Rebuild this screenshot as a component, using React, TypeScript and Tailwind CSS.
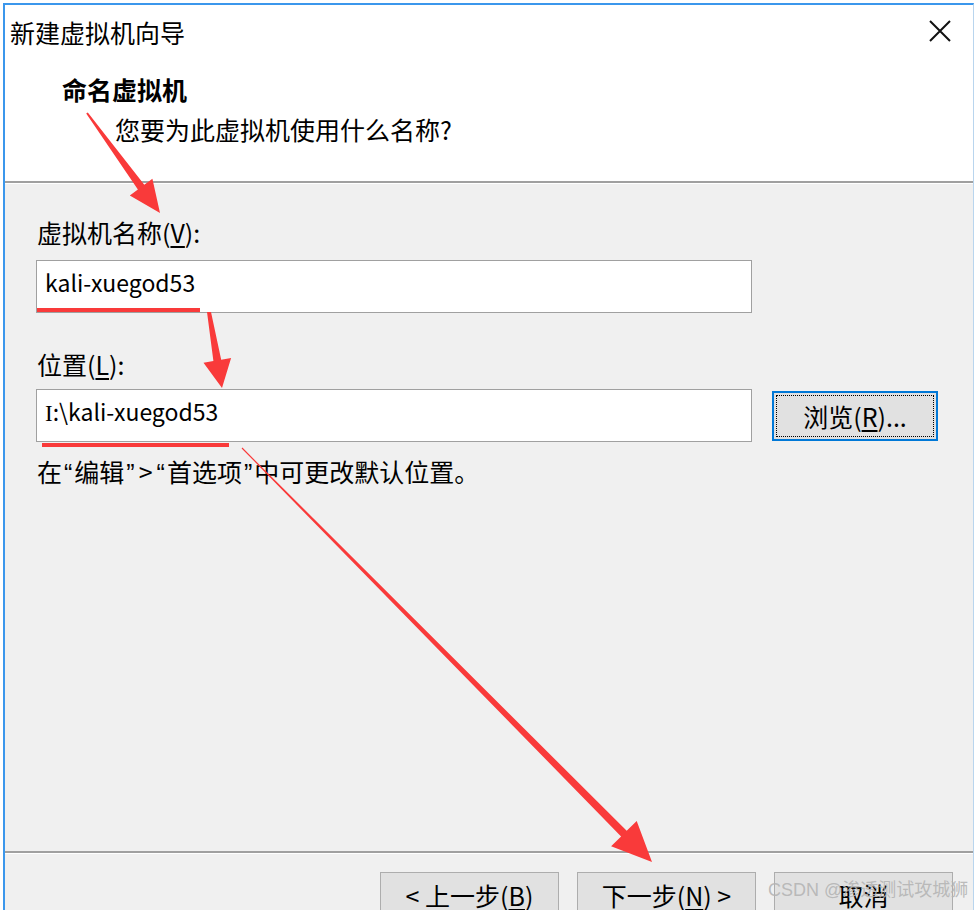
import React from "react";

function Arrows() {
  return (
    <svg
      className="absolute inset-0 pointer-events-none"
      width={975}
      height={910}
      viewBox="0 0 975 910"
    >
      {/* underlines */}
      <rect x={37} y={308} width={163} height={4} fill="#f93a3a" />
      <rect x={42} y={443} width={187} height={4} fill="#f93a3a" />
      {/* arrow 1 */}
      <polygon
        points="86.2,113.6 87.8,112.4 144.3,184.7 152.4,178.8 160,213 129.8,195.4 137.9,189.5"
        fill="#f93a3a"
      />
      {/* arrow 2 */}
      <polygon
        points="207,312 211,312 221.2,359.8 231.1,358 222,388 203.5,362.8 213.4,361"
        fill="#f93a3a"
      />
      {/* arrow 3 */}
      <polygon
        points="241.6,448.4 242.4,447.6 626.7,830.8 636.7,820.9 652,862 611.1,846.3 621.1,836.4"
        fill="#f93a3a"
      />
    </svg>
  );
}

function Btn({ children }: { children: React.ReactNode }) {
  return (
    <div className="w-[179px] h-[46px] shrink-0 border border-[#adadad] bg-[#e1e1e1] flex items-center justify-center text-[25px] leading-[30px]">
      {children}
    </div>
  );
}

function Key({ k }: { k: string }) {
  return <span className="underline underline-offset-[3px]">{k}</span>;
}

function Q({ c }: { c: string }) {
  return <span className="mx-[2px] font-['Liberation_Sans',sans-serif]">{c}</span>;
}

export default function App() {
  return (
    <div className="w-[975px] h-[910px] bg-white relative overflow-hidden text-black font-['Noto_Sans_CJK_SC','Noto_Sans',sans-serif]">
      <div className="ml-[3px] mt-[3px] w-[971px] h-[907px] border-l-2 border-t-2 border-r border-[#3b97ec] border-r-[#b9d5ee] flex flex-col overflow-hidden">
        {/* header */}
        <div className="h-[176px] shrink-0 bg-white flex flex-col">
          <div className="flex justify-between items-start">
            <div className="mt-[12px] ml-[5px] text-[25px] leading-[30px]">新建虚拟机向导</div>
            <svg className="mt-[15px] mr-[22px]" width={22} height={22} viewBox="0 0 22 22">
              <path d="M1 1 L21 21 M21 1 L1 21" stroke="#111" strokeWidth={2} />
            </svg>
          </div>
          <div className="mt-[27px] ml-[57px] text-[25px] leading-[30px] font-bold">命名虚拟机</div>
          <div className="mt-[10px] ml-[110px] text-[25px] leading-[30px]">您要为此虚拟机使用什么名称?</div>
        </div>
        <div className="h-[3px] shrink-0 border-t-2 border-[#a0a0a0] bg-white" />

        {/* body */}
        <div className="h-[667px] shrink-0 bg-[#f0f0f0] pl-[31px] flex flex-col text-[25px] leading-[30px]">
          <div className="mt-[33px] ml-[1px]">
            虚拟机名称(<Key k="V" />):
          </div>
          <div className="mt-[13px] w-[716px] h-[53px] border border-[#a0a0a0] bg-white pl-[8px] pt-[6px] text-[23px]">
            kali-xuegod53
          </div>
          <div className="mt-[36px] ml-[1px]">
            位置(<Key k="L" />):
          </div>
          <div className="mt-[10px] flex items-start">
            <div className="w-[716px] h-[53px] border border-[#a0a0a0] bg-white pl-[8px] pt-[6px] text-[23px]">
              <span className="font-['Liberation_Serif',serif]">I</span>:\kali-xuegod53
            </div>
            <div className="ml-[20px] mt-[2px] w-[166px] h-[50px] border-2 border-[#0078d7] bg-[#e1e1e1] p-[2px]">
              <div className="w-full h-full border border-dotted border-black flex items-center justify-center">
                浏览(<Key k="R" />)...
              </div>
            </div>
          </div>
          <div className="mt-[14px] ml-[1px]">
            在<Q c="“" />编辑<Q c="”" />
            <span className="mx-[2px]">&gt;</span>
            <Q c="“" />首选项<Q c="”" />中可更改默认位置。
          </div>
        </div>

        <div className="h-[3px] shrink-0 border-t-2 border-[#a0a0a0] bg-white" />

        {/* footer */}
        <div className="flex-1 bg-[#f0f0f0] pt-[18px] pl-[375px] flex gap-[18px] items-start">
          <Btn>
            &lt; 上一步(<Key k="B" />)
          </Btn>
          <Btn>
            下一步(<Key k="N" />) &gt;
          </Btn>
          <Btn>取消</Btn>
        </div>
      </div>

      <Arrows />

      <div className="absolute left-[768px] top-[878px] text-[18px] leading-[24px] text-[#b4b4b4]/90 font-['Liberation_Sans','Noto_Sans_CJK_SC',sans-serif] whitespace-nowrap">
        CSDN @渗透测试攻城狮
      </div>
    </div>
  );
}
